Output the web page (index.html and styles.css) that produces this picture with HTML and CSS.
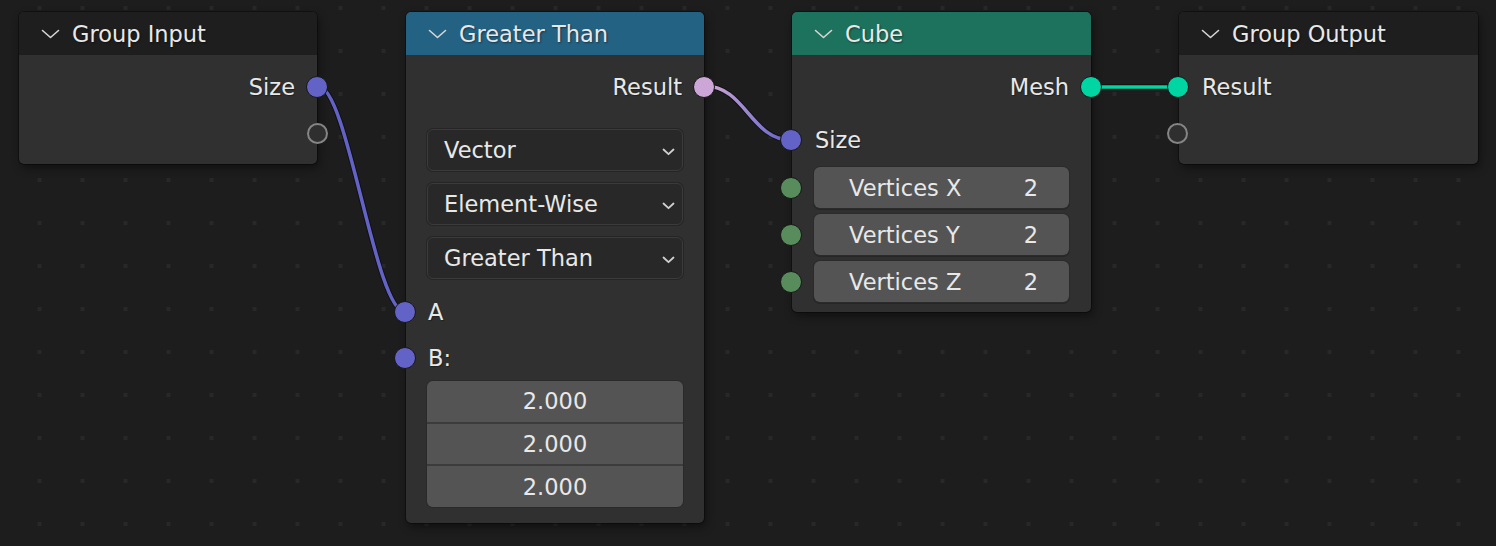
FILE: index.html
```html
<!DOCTYPE html>
<html lang="en">
<head>
<meta charset="utf-8">
<title>Node Editor</title>
<link rel="stylesheet" href="styles.css">
</head>
<body>
<div class="canvas">
  <svg class="links" width="1496" height="546" viewBox="0 0 1496 546">
    <defs>
      <linearGradient id="gradBool" gradientUnits="userSpaceOnUse" x1="712" y1="0" x2="786" y2="0">
        <stop offset="0" stop-color="#cca6d6"/>
        <stop offset="1" stop-color="#6363c7"/>
      </linearGradient>
    </defs>
    <path class="link-shadow" d="M318,86 C348,86 375,312 405,312"/>
    <path class="link-vec" d="M318,86 C348,86 375,312 405,312"/>
    <path class="link-shadow" d="M705,86 C745,86 751,140 791,140"/>
    <path class="link-grad" d="M705,86 C745,86 751,140 791,140"/>
    <path class="link-shadow" d="M1091,87 L1178,87"/>
    <path class="link-geo" d="M1091,87 L1178,87"/>
  </svg>

  <!-- Group Input -->
  <div class="node node-gi">
    <div class="node-header header-dark">
      <svg class="collapse" width="19" height="10" viewBox="0 0 19 10"><polyline points="1.5,1.5 9.5,8.5 17.5,1.5"/></svg>
      <span class="node-title">Group Input</span>
    </div>
    <div class="node-body body-group">
      <div class="row row-out"><span class="label">Size</span><span class="socket socket-out sock-vec"></span></div>
      <div class="row row-out"><span class="socket socket-out sock-open"></span></div>
    </div>
  </div>

  <!-- Greater Than -->
  <div class="node node-gt">
    <div class="node-header header-blue">
      <svg class="collapse" width="19" height="10" viewBox="0 0 19 10"><polyline points="1.5,1.5 9.5,8.5 17.5,1.5"/></svg>
      <span class="node-title">Greater Than</span>
    </div>
    <div class="node-body body-gt">
      <div class="row row-out"><span class="label">Result</span><span class="socket socket-out sock-bool"></span></div>
      <div class="props">
        <div class="dropdown"><span>Vector</span><svg class="dd-arrow" width="13" height="8" viewBox="0 0 13 8"><polyline points="1.5,1.5 6.5,6.2 11.5,1.5"/></svg></div>
        <div class="dropdown"><span>Element-Wise</span><svg class="dd-arrow" width="13" height="8" viewBox="0 0 13 8"><polyline points="1.5,1.5 6.5,6.2 11.5,1.5"/></svg></div>
        <div class="dropdown"><span>Greater Than</span><svg class="dd-arrow" width="13" height="8" viewBox="0 0 13 8"><polyline points="1.5,1.5 6.5,6.2 11.5,1.5"/></svg></div>
      </div>
      <div class="row row-in row-a"><span class="socket socket-in sock-vec"></span><span class="label">A</span></div>
      <div class="row row-in row-b"><span class="socket socket-in sock-vec"></span><span class="label">B:</span></div>
      <div class="vector">
        <div class="vcell">2.000</div>
        <div class="vcell">2.000</div>
        <div class="vcell">2.000</div>
      </div>
    </div>
  </div>

  <!-- Cube -->
  <div class="node node-cube">
    <div class="node-header header-green">
      <svg class="collapse" width="19" height="10" viewBox="0 0 19 10"><polyline points="1.5,1.5 9.5,8.5 17.5,1.5"/></svg>
      <span class="node-title">Cube</span>
    </div>
    <div class="node-body body-cube">
      <div class="row row-out"><span class="label">Mesh</span><span class="socket socket-out sock-geo"></span></div>
      <div class="row row-in row-size"><span class="socket socket-in sock-vec"></span><span class="label">Size</span></div>
      <div class="fields">
        <div class="field-row"><span class="socket socket-in sock-int"></span><div class="numfield"><span>Vertices X</span><span>2</span></div></div>
        <div class="field-row"><span class="socket socket-in sock-int"></span><div class="numfield"><span>Vertices Y</span><span>2</span></div></div>
        <div class="field-row"><span class="socket socket-in sock-int"></span><div class="numfield"><span>Vertices Z</span><span>2</span></div></div>
      </div>
    </div>
  </div>

  <!-- Group Output -->
  <div class="node node-go">
    <div class="node-header header-dark">
      <svg class="collapse" width="19" height="10" viewBox="0 0 19 10"><polyline points="1.5,1.5 9.5,8.5 17.5,1.5"/></svg>
      <span class="node-title">Group Output</span>
    </div>
    <div class="node-body body-group">
      <div class="row row-in"><span class="socket socket-in sock-geo"></span><span class="label">Result</span></div>
      <div class="row row-in"><span class="socket socket-in sock-open"></span></div>
    </div>
  </div>
</div>
</body>
</html>
```

FILE: styles.css
```css
* { box-sizing: border-box; }

html, body {
  margin: 0;
  padding: 0;
  background: #1d1d1d;
}

body {
  font-family: "DejaVu Sans", "Liberation Sans", sans-serif;
  font-size: 22.5px;
  color: #e8e8e8;
}

.canvas {
  position: relative;
  width: 1496px;
  height: 546px;
  overflow: hidden;
  background-color: #1d1d1d;
  background-image: conic-gradient(from 270deg at 4px 4px, #282828 90deg, transparent 0);
  background-size: 43px 43px;
  background-position: 37.5px 6px;
}

.links {
  position: absolute;
  left: 0;
  top: 0;
}

.links path { fill: none; stroke-linecap: round; }
.link-shadow { stroke: rgba(0, 0, 0, 0.45); stroke-width: 5.5; }
.link-vec { stroke: #6363c7; stroke-width: 3.5; }
.link-grad { stroke: url(#gradBool); stroke-width: 3.5; }
.link-geo { stroke: #00d6a3; stroke-width: 3.5; }

/* nodes */
.node {
  position: absolute;
  top: 12px;
  width: 298px;
  background: #303030;
  border-radius: 5px;
  box-shadow: 0 0 0 1px rgba(0, 0, 0, 0.35), 2px 4px 10px rgba(0, 0, 0, 0.45);
}

.node-gi { left: 19px; }
.node-gt { left: 406px; }
.node-cube { left: 792px; width: 299px; }
.node-go { left: 1179px; width: 299px; }

.node-header {
  height: 43px;
  display: flex;
  align-items: center;
  gap: 12px;
  padding-left: 22px;
  border-radius: 5px 5px 0 0;
}

.header-dark { background: #1e1e1e; }
.header-blue { background: #246283; }
.header-green { background: #1d725e; }

.collapse polyline {
  fill: none;
  stroke: #d6d6d6;
  stroke-width: 1.6;
  stroke-linecap: round;
  stroke-linejoin: round;
}

.node-title {
  color: #e8e8e8;
  text-shadow: 1px 1px 2px rgba(0, 0, 0, 0.45);
  white-space: nowrap;
}

.node-body {
  display: flex;
  flex-direction: column;
}

.body-group { padding: 8px 0 7px; }
.body-gt { padding: 8px 0 16px; }
.body-cube { padding: 8px 0 10px; }

.row {
  position: relative;
  height: 47px;
  display: flex;
  align-items: center;
  padding: 0 23px;
}

.row-out { justify-content: flex-end; padding-right: 22px; }
.row-in { justify-content: flex-start; }

.label {
  white-space: nowrap;
  text-shadow: 1px 1px 1px rgba(0, 0, 0, 0.35);
}

.row-a { margin-top: 10px; height: 46px; padding-left: 22px; }
.row-b { height: 46px; padding-left: 22px; }
.row-size { margin-top: 7px; height: 46px; }

/* sockets */
.socket {
  position: absolute;
  top: 50%;
  width: 22px;
  height: 22px;
  margin-top: -11px;
  border-radius: 50%;
  border: 1.5px solid #171717;
}

.socket-out { right: -11px; }
.socket-in { left: -12px; }

.sock-vec { background: #6363c7; }
.sock-bool { background: #cca6d6; }
.sock-geo { background: #00d6a3; }
.sock-int { background: #598c5c; }
.sock-open {
  background: #2f2f2f;
  border: 2px solid #858585;
  width: 21px;
  height: 21px;
  margin-top: -10.5px;
}

/* dropdowns */
.props {
  margin-top: 19px;
  padding: 0 21px;
  display: flex;
  flex-direction: column;
  gap: 12px;
}

.dropdown {
  height: 42px;
  display: flex;
  align-items: center;
  justify-content: space-between;
  padding: 0 7px 0 16px;
  background: #282828;
  border: 1px solid #3b3b3b;
  border-radius: 6px;
  box-shadow: 0 0 0 1px #252525;
}

.dropdown span { white-space: nowrap; }

.dd-arrow { margin-top: 4px; }
.dd-arrow polyline {
  fill: none;
  stroke: #d0d0d0;
  stroke-width: 1.8;
  stroke-linecap: round;
  stroke-linejoin: round;
}

/* vector value */
.vector {
  margin: 0 21px;
  height: 126px;
  display: flex;
  flex-direction: column;
  gap: 2px;
  background: #3c3c3c;
  border-radius: 6px;
  overflow: hidden;
  box-shadow: 0 0 0 1px #2a2a2a;
}

.vcell {
  flex: 1;
  display: flex;
  align-items: center;
  justify-content: center;
  background: #545454;
}

/* cube fields */
.fields {
  margin-top: 4px;
  display: flex;
  flex-direction: column;
  gap: 6px;
}

.field-row {
  position: relative;
  height: 41px;
  padding: 0 22px;
  display: flex;
}

.numfield {
  flex: 1;
  display: flex;
  align-items: center;
  justify-content: space-between;
  padding: 0 31px 0 35px;
  background: #545454;
  border-radius: 6px;
  box-shadow: 0 0 0 1px #2b2b2b, 0 1px 0 1px #262626;
}

.numfield span { white-space: nowrap; }
```
